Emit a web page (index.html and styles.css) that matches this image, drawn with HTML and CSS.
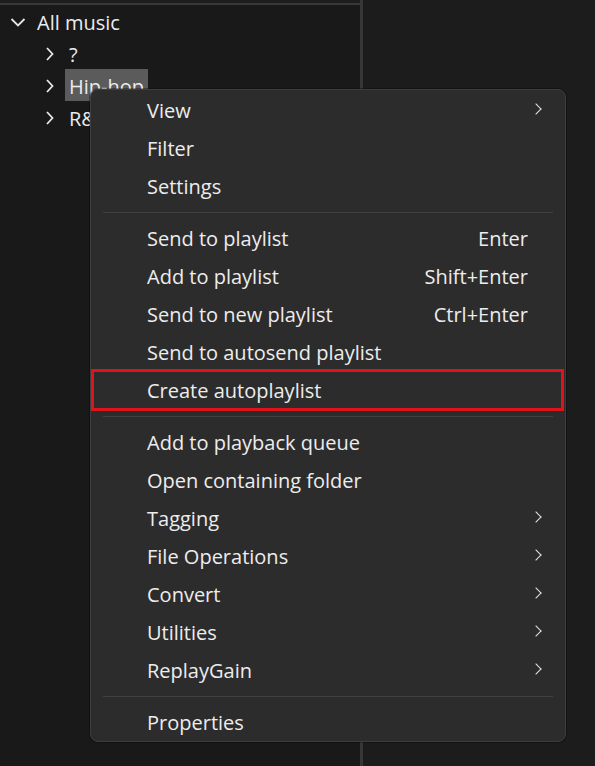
FILE: index.html
```html
<!DOCTYPE html>
<html>
<head>
<meta charset="utf-8">
<link rel="stylesheet" href="styles.css">
</head>
<body>
<div class="app">
  <div class="left">
    <div class="topline"></div>
    <ul class="tree">
      <li class="row root">
        <svg class="chev" width="16" height="16" viewBox="0 0 16 16"><path d="M1.5 5 L8 11.5 L14.5 5" fill="none" stroke="#e6e6e6" stroke-width="1.8"/></svg>
        <span class="label">All music</span>
      </li>
      <li class="row child">
        <svg class="chev" width="16" height="16" viewBox="0 0 16 16"><path d="M5 2 L10.5 8 L5 14" fill="none" stroke="#e6e6e6" stroke-width="1.8"/></svg>
        <span class="label">?</span>
      </li>
      <li class="row child">
        <svg class="chev" width="16" height="16" viewBox="0 0 16 16"><path d="M5 2 L10.5 8 L5 14" fill="none" stroke="#e6e6e6" stroke-width="1.8"/></svg>
        <span class="label sel">Hip-hop</span>
      </li>
      <li class="row child">
        <svg class="chev" width="16" height="16" viewBox="0 0 16 16"><path d="M5 2 L10.5 8 L5 14" fill="none" stroke="#e6e6e6" stroke-width="1.8"/></svg>
        <span class="label">R&amp;B</span>
      </li>
    </ul>
  </div>
  <div class="divider"></div>
  <div class="right"></div>

  <div class="menu">
    <div class="item"><span class="text">View</span><span class="sub"></span></div>
    <div class="item"><span class="text">Filter</span></div>
    <div class="item"><span class="text">Settings</span></div>
    <div class="sep"></div>
    <div class="item"><span class="text">Send to playlist</span><span class="key">Enter</span></div>
    <div class="item"><span class="text">Add to playlist</span><span class="key">Shift+Enter</span></div>
    <div class="item"><span class="text">Send to new playlist</span><span class="key">Ctrl+Enter</span></div>
    <div class="item"><span class="text">Send to autosend playlist</span></div>
    <div class="item marked"><span class="text">Create autoplaylist</span></div>
    <div class="sep"></div>
    <div class="item"><span class="text">Add to playback queue</span></div>
    <div class="item"><span class="text">Open containing folder</span></div>
    <div class="item"><span class="text">Tagging</span><span class="sub"></span></div>
    <div class="item"><span class="text">File Operations</span><span class="sub"></span></div>
    <div class="item"><span class="text">Convert</span><span class="sub"></span></div>
    <div class="item"><span class="text">Utilities</span><span class="sub"></span></div>
    <div class="item"><span class="text">ReplayGain</span><span class="sub"></span></div>
    <div class="sep"></div>
    <div class="item"><span class="text">Properties</span></div>
  </div>
</div>
</body>
</html>
```
FILE: styles.css
```css
* { box-sizing: border-box; }
html, body { margin: 0; padding: 0; }
body {
  width: 595px;
  height: 766px;
  overflow: hidden;
  background: #1c1c1c;
  font-family: "Open Sans", "Noto Sans", sans-serif;
  color: #e8e8e8;
}
.app {
  position: relative;
  display: flex;
  width: 595px;
  height: 766px;
}
.left {
  width: 360px;
  background: #191919;
  display: flex;
  flex-direction: column;
}
.topline {
  height: 5px;
  background: #1e1e1e;
  border-bottom: 2px solid #383838;
}
.divider {
  width: 3px;
  background: #363636;
}
.right {
  flex: 1;
  background: #1c1c1c;
}
.tree {
  list-style: none;
  margin: 0;
  padding: 0;
}
.row {
  height: 32px;
  display: flex;
  align-items: center;
  font-size: 20px;
  color: #ececec;
}
.row.root { padding-left: 10px; height: 30px; margin-top: 2px; }
.row.child { padding-left: 42px; }
.chev { flex: none; }
.row.root .label { margin-left: 11px; }
.row.child .label {
  margin-left: 7px;
  padding: 3px 4px 0 4px;
  height: 32px;
  line-height: 29px;
}
.row.child .chev { margin-top: 1px; }
.row.child .label.sel { background: #5b5b5b; }

.menu {
  position: absolute;
  left: 90px;
  top: 89px;
  width: 476px;
  background: #2c2c2c;
  border: 1px solid #3e3e3e;
  border-radius: 8px;
  padding: 1px 0 0 0;
  font-size: 20px;
  color: #ededed;
  box-shadow: 0 0 0 1px rgba(0,0,0,0.3);
}
.item {
  position: relative;
  height: 38px;
  display: flex;
  align-items: center;
  padding-left: 56px;
  padding-right: 37px;
}
.item .text { flex: 1; }
.item .key { text-align: right; }
.item .sub {
  position: absolute;
  right: 23px;
  top: 13px;
  width: 10px;
  height: 10px;
}
.item .sub::before {
  content: "";
  position: absolute;
  left: 0;
  top: 1px;
  width: 7px;
  height: 7px;
  border-right: 1.6px solid #e6e6e6;
  border-top: 1.6px solid #e6e6e6;
  transform: rotate(45deg);
}
.item.marked::after {
  content: "";
  position: absolute;
  left: 0;
  right: 1px;
  top: -2px;
  bottom: -2px;
  border: 3px solid #e0121a;
}
.sep {
  height: 14px;
  display: flex;
  align-items: center;
  padding: 0 12px;
}
.sep::before {
  content: "";
  flex: 1;
  height: 1px;
  background: #404040;
}
```
